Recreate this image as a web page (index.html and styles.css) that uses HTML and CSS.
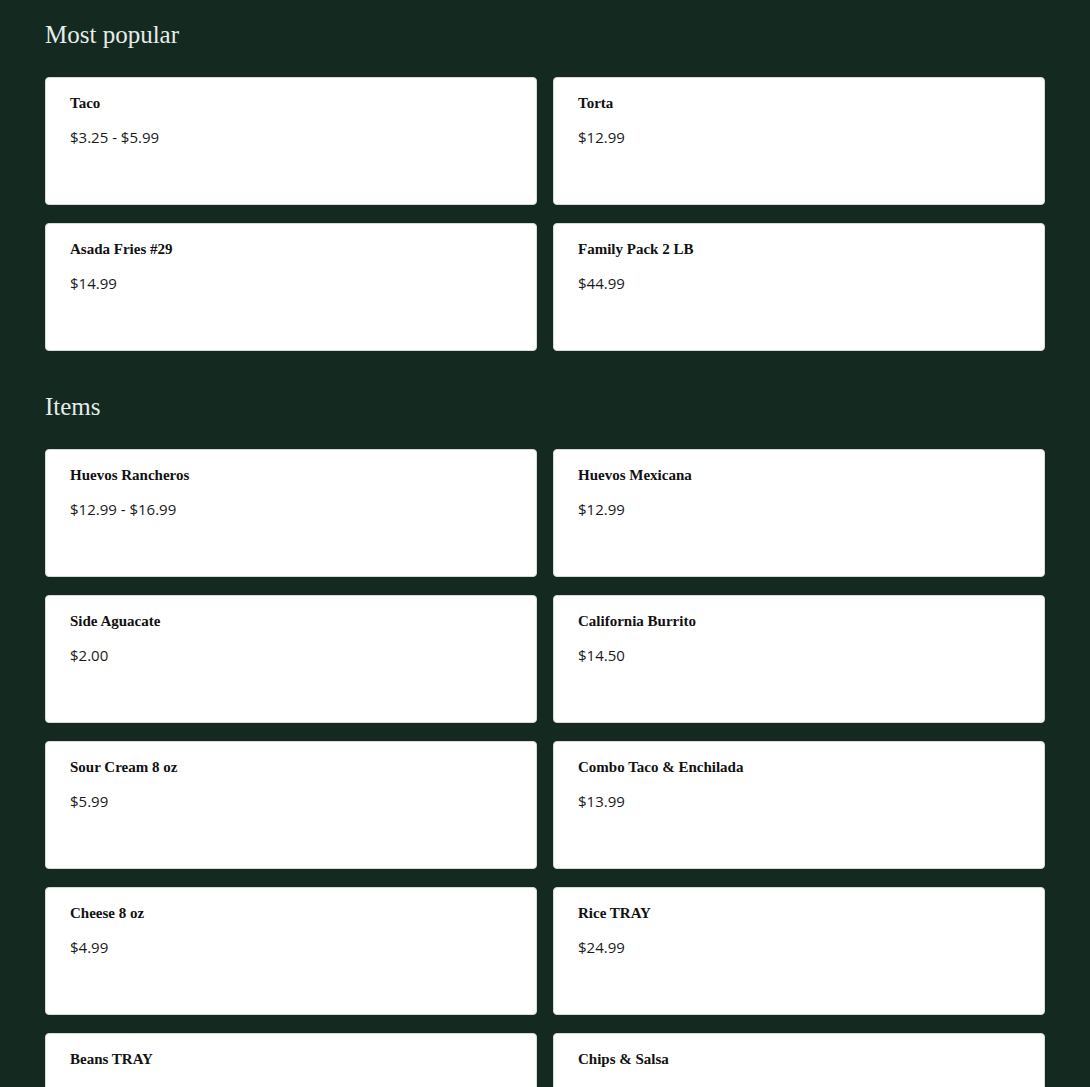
FILE: index.html
```html
<!DOCTYPE html>
<html>
<head>
<meta charset="utf-8">
<link rel="stylesheet" href="styles.css">
</head>
<body>
<main class="page">
  <section class="section">
    <h2 class="section-title">Most popular</h2>
    <div class="grid">
      <div class="card"><div class="name">Taco</div><div class="price">$3.25 - $5.99</div></div>
      <div class="card"><div class="name">Torta</div><div class="price">$12.99</div></div>
      <div class="card"><div class="name">Asada Fries #29</div><div class="price">$14.99</div></div>
      <div class="card"><div class="name">Family Pack 2 LB</div><div class="price">$44.99</div></div>
    </div>
  </section>
  <section class="section">
    <h2 class="section-title">Items</h2>
    <div class="grid">
      <div class="card"><div class="name">Huevos Rancheros</div><div class="price">$12.99 - $16.99</div></div>
      <div class="card"><div class="name">Huevos Mexicana</div><div class="price">$12.99</div></div>
      <div class="card"><div class="name">Side Aguacate</div><div class="price">$2.00</div></div>
      <div class="card"><div class="name">California Burrito</div><div class="price">$14.50</div></div>
      <div class="card"><div class="name">Sour Cream 8 oz</div><div class="price">$5.99</div></div>
      <div class="card"><div class="name">Combo Taco &amp; Enchilada</div><div class="price">$13.99</div></div>
      <div class="card"><div class="name">Cheese 8 oz</div><div class="price">$4.99</div></div>
      <div class="card"><div class="name">Rice TRAY</div><div class="price">$24.99</div></div>
      <div class="card"><div class="name">Beans TRAY</div><div class="price">$4.99</div></div>
      <div class="card"><div class="name">Chips &amp; Salsa</div><div class="price">$4.99</div></div>
    </div>
  </section>
</main>
</body>
</html>
```
FILE: styles.css
```css
html, body {
  margin: 0;
  padding: 0;
  background: #142a20;
}
.page {
  padding: 17px 45px 40px 45px;
}
.section {
  margin-bottom: 38px;
}
.section-title {
  margin: 0 0 24px 0;
  font-family: "Liberation Serif", "DejaVu Serif", serif;
  font-weight: normal;
  font-size: 25px;
  line-height: 36px;
  color: #e6ece8;
}
.grid {
  display: grid;
  grid-template-columns: 1fr 1fr;
  column-gap: 16px;
  row-gap: 18px;
}
.card {
  box-sizing: border-box;
  height: 128px;
  background: #fff;
  border: 1px solid #d6dbd8;
  border-radius: 4px;
  padding: 15px 24px;
}
.name {
  font-family: "Liberation Serif", "DejaVu Serif", serif;
  font-weight: bold;
  font-size: 15px;
  line-height: 20px;
  color: #111;
}
.price {
  margin-top: 14px;
  font-family: "Open Sans", "Lato", sans-serif;
  font-size: 15px;
  line-height: 20px;
  color: #1a1a1a;
}
```
